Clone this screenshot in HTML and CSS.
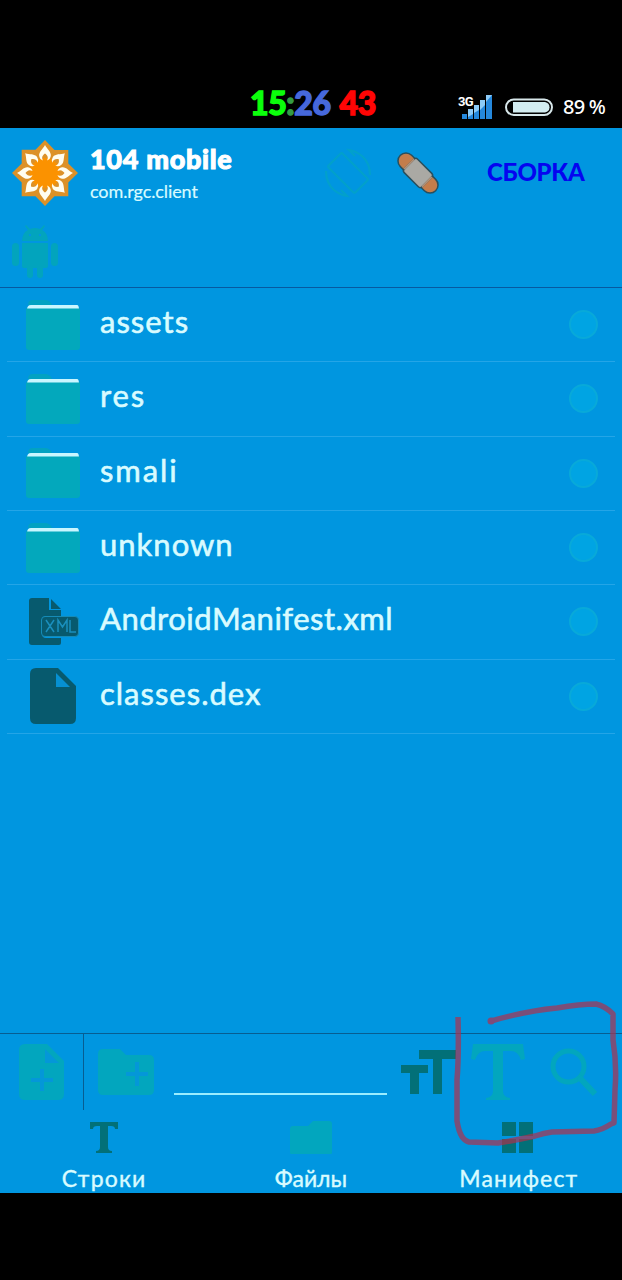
FILE: index.html
```
<!DOCTYPE html>
<html lang="ru">
  <head>
    <meta charset="utf-8" />
    <meta name="viewport" content="width=device-width, initial-scale=1.0" />
    <title>104 mobile</title>
    <link rel="stylesheet" href="styles.css">
  </head>

  <body class="body">
    <!-- shared icons -->
    <svg class="defs">
      <symbol id="folder" viewBox="0 0 56 52">
        <path d="M2 11q0-5 4-5h46q2 0 2 5z" fill="#c9f6ff"/>
        <path d="M1 9.500h54v38.500q0 3-3 3H4q-3 0-3-3z" fill="#03a8bc"/>
        <path d="M3 6q0-5 5-5h12q5 0 7 5z" fill="#02a2c2"/>
      </symbol>
    </svg>

    <header class="status">
      <div class="clock"><span class="hours">15</span><span class="colon">:</span><span class="minutes">26</span><span class="seconds">43</span></div>
      <div class="signal">
        <svg width="34" height="26" viewBox="0 0 34 26">
          <path d="M3 20h5v5H3zM9 15h5v10H9zM15 11h5v14h-5zM21 6h5v19h-5zM27 1h6v24h-6z" fill="#2588dc"/>
          <path d="M9 15h5v5l-5 3zM15 11h5v5l-5 3zM21 6h5v5l-5 5zM27 1h6L27 8z" fill="#8dcbf7"/>
        </svg>
        <span class="net">3G</span>
      </div>
      <svg class="battery" width="49" height="19" viewBox="0 0 49 19">
        <rect x="1" y="1.500" width="46" height="15.500" rx="7.750" fill="#000" stroke="#d7e7ea" stroke-width="2"/>
        <path d="M8 4h32q4.500 1 4.500 5.250T40 14.500H8z" fill="#d3edf1"/>
      </svg>
      <span class="percent">89 %</span>
    </header>

    <main class="app">
      <div class="topbar">
        <svg class="logo" width="66" height="66" viewBox="-33 -33 66 66">
          <path d="M0-33 9.500-23H23.300V-9.500L33 0 23.300 9.500V23.300H9.500L0 33-9.500 23.300H-23.300V9.500L-33 0-23.300-9.500V-23.300H-9.500z" fill="#dc9128"/>
          <circle r="15" fill="#fb9200"/>
          <g fill="#fffdf0">
            <path id="petal" d="M0-28C2-24 6.500-21 5.800-17Q5.200-13.500 2-12.500C4-16 2-18 0-19.500C-2-18-4-16-2-12.500Q-5.200-13.500-5.800-17C-6.500-21-2-24 0-28z"/>
            <use href="#petal" transform="rotate(45)"/>
            <use href="#petal" transform="rotate(90)"/>
            <use href="#petal" transform="rotate(135)"/>
            <use href="#petal" transform="rotate(180)"/>
            <use href="#petal" transform="rotate(225)"/>
            <use href="#petal" transform="rotate(270)"/>
            <use href="#petal" transform="rotate(315)"/>
          </g>
        </svg>
        <div class="names">
          <div class="title">104 mobile</div>
          <div class="package">com.rgc.client</div>
        </div>
        <svg class="rotate" width="50" height="50" viewBox="-25 -25 50 50" fill="none" stroke="#02a0cb" stroke-width="2.200">
          <rect x="-10" y="-19" width="20" height="38" rx="2" transform="rotate(-45)"/>
          <path d="M-22-2Q-22 10-14 17Q-8 22-1 23l-6-6M22 2Q22-10 14-17Q8-22 1-23l6 6"/>
        </svg>
        <svg class="patch" width="42" height="42" viewBox="-21 -21 42 42">
          <g transform="rotate(45)" stroke="#28505f" stroke-width="1.500">
            <rect x="-25" y="-8" width="50" height="16" rx="8" fill="#c47d4b"/>
            <rect x="-12.500" y="-9.500" width="25" height="19" rx="2.500" fill="#aaa9a4"/>
            <path d="M-12.500-7V7M12.500-7V7" stroke="#b5947a"/>
          </g>
        </svg>
        <span class="build">СБОРКА</span>
      </div>
      <div class="crumbs">
        <svg width="48" height="54" viewBox="0 0 48 54" fill="#02a4bd">
          <path d="M11 16Q11 8 17 5l-3-4 1-1 4 4q5-2 10 0l4-4 1 1-3 4q6 3 6 11z"/>
          <path d="M11 18h26v23q0 2-2 2h-3v7q0 3-3 3t-3-3v-7h-4v7q0 3-3 3t-3-3v-7h-3q-2 0-2-2z"/>
          <rect x="1" y="18" width="7" height="23" rx="3.500"/>
          <rect x="40" y="18" width="7" height="23" rx="3.500"/>
          <path d="M18 9h2v2h-2zM28 9h2v2h-2z" fill="#0096e0"/>
        </svg>
      </div>

      <ul class="files">
        <li class="row"><svg class="icon" width="56" height="52"><use href="#folder"/></svg><span class="name">assets</span><i class="dot"></i></li>
        <li class="row"><svg class="icon" width="56" height="52"><use href="#folder"/></svg><span class="name wide">res</span><i class="dot"></i></li>
        <li class="row"><svg class="icon" width="56" height="52"><use href="#folder"/></svg><span class="name wide">smali</span><i class="dot"></i></li>
        <li class="row"><svg class="icon" width="56" height="52"><use href="#folder"/></svg><span class="name">unknown</span><i class="dot"></i></li>
        <li class="row">
          <svg class="icon" width="56" height="48" viewBox="0 0 56 48">
            <path d="M7 0h17v12h12v6H21q-4 0-4 4v14q0 4 4 4h15v5q0 2-2 2H7q-3 0-3-3V3q0-3 3-3zM26 1l10 10H26z" fill="#075a6e"/>
            <rect x="16.500" y="18.500" width="37" height="20" rx="3.500" fill="#075a6e" stroke="#168bb6"/>
            <path d="M21 22l8 12M29 22l-8 12M33 34V22l4.500 7 4.500-7v12M45 22v12h6" fill="none" stroke="#1a8fbd" stroke-width="1.500"/>
          </svg>
          <span class="name tight">AndroidManifest.xml</span><i class="dot"></i>
        </li>
        <li class="row">
          <svg class="icon" width="56" height="56" viewBox="0 0 56 56">
            <path d="M11 0h22l18 18v32q0 6-6 6H11q-6 0-6-6V6q0-6 6-6z" fill="#075a6e"/>
            <path d="M31 5v14h14z" fill="#0690d2"/>
          </svg>
          <span class="name">classes.dex</span><i class="dot"></i>
        </li>
      </ul>

      <div class="tools">
        <div class="newfile">
          <svg width="46" height="56" viewBox="0 0 46 56">
            <path d="M6 0h22l17 17v33q0 6-6 6H6q-6 0-6-6V6q0-6 6-6z" fill="#02a6be"/>
            <path d="M26 5v14h14zM21 25h4v9h9v4h-9v9h-4v-9h-9v-4h9z" fill="#0497d8"/>
          </svg>
        </div>
        <svg class="newfolder" width="56" height="46" viewBox="0 0 56 46">
          <path d="M5 0h17l6 6h23q5 0 5 5v30q0 5-5 5H5q-5 0-5-5V5q0-5 5-5z" fill="#02a6be"/>
          <path d="M37 13h4v10h9v4h-9v10h-4V27h-9v-4h9z" fill="#0497d8"/>
        </svg>
        <div class="field"></div>
        <svg class="size" width="55" height="44" viewBox="0 0 55 44">
          <path d="M18 0h37v9H41v35h-9V9H18zM0 15h27v8h-9v21H9V23H0z" fill="#027078"/>
        </svg>
        <svg class="font" width="54" height="56" viewBox="0 0 54 56">
          <path d="M2 0h50l2 15-4 1q-3-9-10-9h-8v40q0 6 7 7v2H15v-2q7-1 7-7V7h-8Q7 7 4 16l-4-1z" fill="#02a6be"/>
        </svg>
        <svg class="search" width="48" height="49" viewBox="0 0 48 49" fill="none" stroke="#02a6be">
          <circle cx="18.500" cy="18.500" r="15.500" stroke-width="5"/>
          <path d="M29 29 45 46" stroke-width="6"/>
        </svg>
      </div>

      <nav class="tabs">
        <div class="tab">
          <svg width="42" height="33" viewBox="0 0 42 33">
            <path d="M7 1h28v7h-3q0-3-4-3h-3v21q0 4 4 4v2H13v-2q4 0 4-4V5h-3q-4 0-4 3H7z" fill="#027078"/>
          </svg>
          <span class="label spaced">Строки</span>
        </div>
        <div class="tab">
          <svg width="42" height="33" viewBox="0 0 42 33">
            <path d="M0 8q0-3 3-3h15l5-5h16q3 0 3 3v28q0 3-3 3H3q-3 0-3-3z" fill="#02a6be"/>
          </svg>
          <span class="label">Файлы</span>
        </div>
        <div class="tab">
          <svg width="32" height="33" viewBox="0 0 32 33">
            <path d="M0 1h14v14H0zM17 1h14v14H17zM0 18h14v14H0zM17 18h14v14H17z" fill="#027078"/>
          </svg>
          <span class="label spaced">Манифест</span>
        </div>
      </nav>
    </main>

    <!-- hand-drawn marker around the font and search buttons -->
    <svg class="marker" width="172" height="150" viewBox="450 1000 172 150">
      <path d="M491 1021Q526 1011 557 1008Q580 1004 596 1004Q605 1006 613 1014L613 1040Q617 1065 615 1090L614 1123L611 1124Q602 1130 594 1131L552 1132Q544 1133 535 1136Q517 1140 498 1143L469 1142Q460 1140 457 1121V1080Q459 1055 458 1017" fill="none" stroke="#b32d49" stroke-opacity=".68" stroke-width="5.500" stroke-linejoin="round"/>
      <circle cx="491" cy="1021" r="3.500" fill="#7d4c79"/>
    </svg>
  </body>
</html>
```
FILE: styles.css
```
body {
  margin: 0;
  padding: 0;
  background-color: #000;
}

.body {
  height: 1280px;
  color: #d8fbff;
  font-family: Lato, "Open Sans", sans-serif;
  overflow: hidden;
}

svg {
  display: block;
  flex: none;
}

.defs {
  display: none;
}

.status {
  display: flex;
  align-items: flex-start;
  box-sizing: border-box;
  height: 128px;
  padding: 0 0 0 250px;
  white-space: nowrap;
}

.clock {
  width: 211px;
  padding-top: 83px;
  font-size: 32px;
  font-weight: 900;
  line-height: 40px;
  letter-spacing: -0.4px;
  -webkit-text-stroke: 1.4px;
}
.hours { color: #0bff0b; }
.colon { color: #359b45; }
.minutes { color: #4668dc; }
.seconds { color: #ff0505; margin-left: 9px; }

.signal {
  position: relative;
  margin: 94px 12px 0 -2px;
}
.net {
  position: absolute;
  left: -1px;
  top: 0;
  color: #fff;
  font: bold 13px/15px Roboto, sans-serif;
  letter-spacing: -0.8px;
}
.battery {
  margin-top: 98px;
}
.percent {
  margin: 95px 0 0 9px;
  color: #fff;
  font: 500 20px/24px "Noto Sans", sans-serif;
  letter-spacing: -0.8px;
}

.app {
  display: flex;
  flex-direction: column;
  height: 1065px;
  background-color: #0096e0;
}

.topbar {
  display: flex;
  align-items: center;
  height: 90px;
  padding-left: 12px;
  white-space: nowrap;
}
.names {
  width: 233px;
  margin-left: 12px;
}
.title {
  color: #fff;
  font-size: 27px;
  font-weight: 900;
  line-height: 34px;
  letter-spacing: 0.7px;
  -webkit-text-stroke: 1px;
}
.package {
  padding-top: 2px;
  font-size: 18px;
  line-height: 26px;
  letter-spacing: -0.1px;
  -webkit-text-stroke: 0.2px;
}
.patch {
  margin-left: 24px;
  overflow: visible;
}
.build {
  margin: 0 0 3px 48px;
  color: #0505f0;
  font-size: 24px;
  font-weight: 900;
  letter-spacing: -0.3px;
}

.crumbs {
  box-sizing: border-box;
  height: 70px;
  padding: 7px 0 0 11px;
  border-bottom: 1px solid #0759a0;
}

.files {
  flex: 1;
  margin: 0;
  padding: 0 7px;
  list-style: none;
}
.row {
  display: flex;
  align-items: center;
  box-sizing: border-box;
  height: 74.330px;
  padding: 0 17px 0 18px;
  border-bottom: 1.500px solid #24a5e7;
}
.name {
  flex: 1;
  margin-left: 19px;
  padding-bottom: 7px;
  font-size: 31px;
  line-height: 38px;
  letter-spacing: 1px;
  -webkit-text-stroke: 0.6px;
}
.name.wide {
  letter-spacing: 1.9px;
}
.name.tight {
  letter-spacing: 0.5px;
}
.dot {
  box-sizing: border-box;
  width: 29px;
  height: 29px;
  border: 2px solid #08a9d9;
  border-radius: 50%;
  background-color: #00a4e3;
}

.tools {
  display: flex;
  align-items: center;
  box-sizing: border-box;
  height: 77px;
  border-top: 1px solid #075d91;
}
.newfile {
  display: flex;
  align-items: center;
  box-sizing: border-box;
  width: 84px;
  height: 76px;
  padding-left: 19px;
  border-right: 1px solid #075d91;
}
.newfolder {
  margin-left: 14px;
}
.field {
  box-sizing: border-box;
  width: 213px;
  height: 62px;
  margin-left: 20px;
  margin-bottom: 16px;
  border-bottom: 2px solid #9aedff;
}
.size {
  margin-left: 14px;
}
.font {
  margin-left: 15px;
}
.search {
  margin-left: 25px;
}

.tabs {
  display: flex;
  height: 83px;
}
.tab {
  display: flex;
  flex: 1;
  flex-direction: column;
  align-items: center;
  padding-top: 11px;
}
.label {
  margin-top: 10px;
  font-size: 23px;
  line-height: 28px;
  -webkit-text-stroke: 0.4px;
}
.label.spaced {
  margin-left: 1px;
  letter-spacing: 1.2px;
}

.marker {
  position: absolute;
  left: 450px;
  top: 1000px;
}
```
